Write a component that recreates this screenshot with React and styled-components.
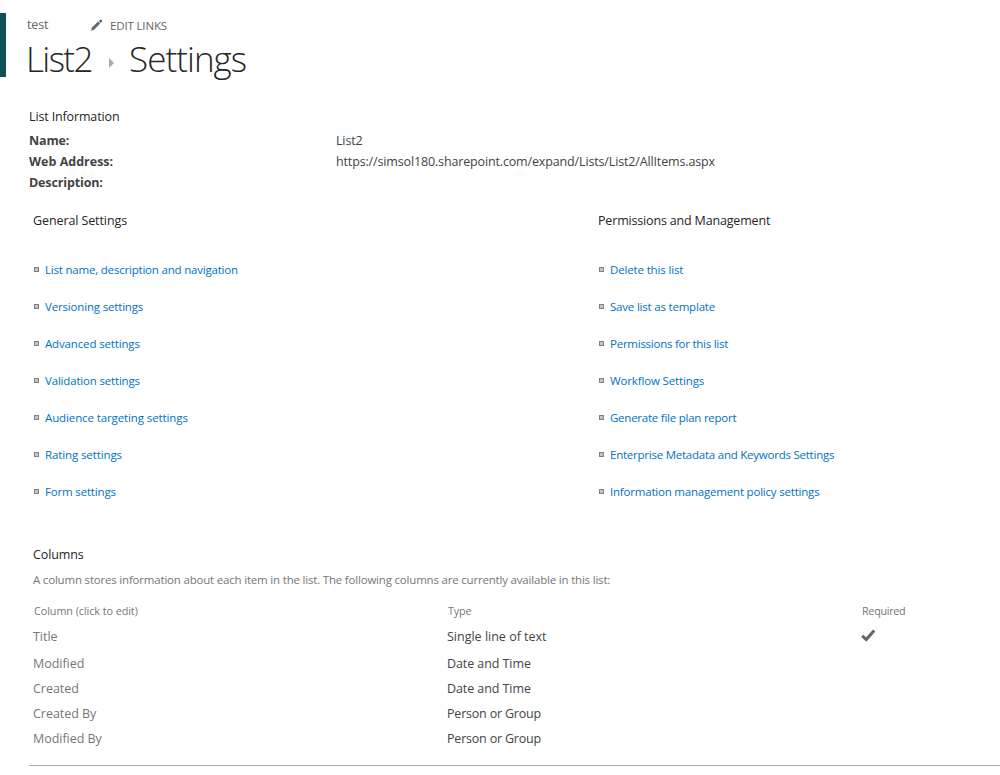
import React from 'react';
import styled, { createGlobalStyle } from 'styled-components';

const GlobalStyle = createGlobalStyle`
  *, *::before, *::after { box-sizing: border-box; }
  body {
    margin: 0;
    background: #fff;
    color: #444;
    font: 12.5px "Open Sans", "Noto Sans", sans-serif;
    overflow: hidden;
  }
`;

const Page = styled.main`
  height: 775px;
  padding-top: 13px;
  overflow: hidden;
  white-space: nowrap;
`;

const Header = styled.header`
  display: flex;
  height: 68px;
`;

const Accent = styled.div`
  width: 6px;
  height: 64px;
  margin-right: 21px;
  background: #0f5053;
`;

const TopLinks = styled.nav`
  display: flex;
  height: 23px;
  line-height: 23px;
  color: #666;
`;

const SiteLink = styled.a`
  width: 64px;
  letter-spacing: -0.15px;
`;

const EditLinks = styled.a`
  display: flex;
  gap: 7px;
  padding-top: 1px;
  font-size: 11.5px;
  letter-spacing: -0.15px;

  svg { margin-top: 5px; }
`;

const Title = styled.h1`
  display: flex;
  margin: 0;
  height: 45px;
  line-height: 45px;
  font-size: 35px;
  font-weight: 300;
  color: #262626;

  svg { margin: 22px 17px 0 16px; }
`;

const TitlePart = styled.span`
  width: ${(p) => p.$width}px;
  letter-spacing: ${(p) => p.$track}px;
  margin-left: ${(p) => p.$shift}px;
`;

const Info = styled.section`
  padding: 25px 0 0 29px;
`;

const Heading = styled.h2`
  margin: 0;
  height: 21px;
  line-height: 21px;
  font-size: 12.5px;
  font-weight: 400;
  color: #262626;
  letter-spacing: ${(p) => p.$track || 0}px;
`;

const Facts = styled.dl`
  display: grid;
  grid-template-columns: 307px auto;
  grid-auto-rows: 21px;
  margin: 3px 0 0;
  line-height: 21px;
`;

const Term = styled.dt`
  font-weight: 700;
  letter-spacing: ${(p) => p.$track || 0}px;
`;

const Value = styled.dd`
  margin: 0;
  letter-spacing: ${(p) => p.$track || 0}px;
`;

const Groups = styled.div`
  display: grid;
  grid-template-columns: 565px auto;
  padding: 17px 0 0 33px;
`;

const LinkList = styled.ul`
  margin: 20px 0 0;
  padding: 0;
  list-style: none;
`;

const LinkItem = styled.li`
  display: flex;
  align-items: center;
  gap: 5px;
  height: 37px;
  padding-left: 1px;

  &::before {
    content: '';
    width: 5px;
    height: 5px;
    margin-right: 1px;
    border: 1px solid #808080;
    background: #c4c4c4;
  }
`;

const SettingLink = styled.a`
  font-size: 11.5px;
  color: #0072c6;
  letter-spacing: ${(p) => p.$track}px;
`;

const Columns = styled.section`
  padding: 34px 0 0 33px;
`;

const Note = styled.p`
  margin: 5px 0 9px;
  height: 20px;
  line-height: 20px;
  font-size: 11.5px;
  letter-spacing: -0.193px;
  color: #777;
`;

const Row = styled.div`
  display: grid;
  grid-template-columns: 414px 414px auto;
  align-items: center;
  height: ${(p) => p.$height}px;
  margin-bottom: ${(p) => p.$gap || 0}px;

  svg { margin-bottom: 2px; }
`;

const HeadCell = styled.span`
  padding-left: 1px;
  font-size: 10.8px;
  color: #777;
  letter-spacing: ${(p) => p.$track || 0}px;
`;

const NameCell = styled.a`
  color: #777;
  letter-spacing: -0.03px;
`;

const TypeCell = styled.span`
  letter-spacing: ${(p) => p.$track || 0}px;
`;

const Divider = styled.hr`
  height: 1px;
  margin: 14px 0 0 29px;
  border: 0;
  background: #aaa;
`;

const general = [
  ['List name, description and navigation', -0.2],
  ['Versioning settings', -0.17],
  ['Advanced settings', -0.15],
  ['Validation settings', -0.18],
  ['Audience targeting settings', -0.11],
  ['Rating settings', -0.11],
  ['Form settings', -0.17],
];

const permissions = [
  ['Delete this list', -0.15],
  ['Save list as template', -0.2],
  ['Permissions for this list', -0.25],
  ['Workflow Settings', -0.14],
  ['Generate file plan report', -0.24],
  ['Enterprise Metadata and Keywords Settings', -0.235],
  ['Information management policy settings', -0.2],
];

const columns = [
  { name: 'Title', type: 'Single line of text', track: 0 },
  { name: 'Modified', type: 'Date and Time', track: -0.08 },
  { name: 'Created', type: 'Date and Time', track: -0.08 },
  { name: 'Created By', type: 'Person or Group', track: -0.2 },
  { name: 'Modified By', type: 'Person or Group', track: -0.2 },
];
columns[0].required = true;

const Pencil = () => (
  <svg width="12" height="12" viewBox="0 0 12 12" fill="#666">
    <path d="M0 11.7 1 8.6 7.2 2.6 9.1 4.6 3.1 10.7ZM7.9 1.9 9.2.7Q9.9.2 10.5.7L11 1.2Q11.6 1.9 11.1 2.6L9.8 3.9Z" />
  </svg>
);

const Arrow = () => (
  <svg width="5" height="10" viewBox="0 0 5 10" fill="#aaa">
    <path d="M0 0 5 5 0 10Z" />
  </svg>
);

const Check = () => (
  <svg width="15" height="13" viewBox="0 0 15 13" fill="none" stroke="#666" strokeWidth="3">
    <path d="M1.2 6.7 5.2 10.6 13.2 1.4" />
  </svg>
);

const Group = ({ title, track, links }) => (
  <section>
    <Heading $track={track}>{title}</Heading>
    <LinkList>
      {links.map(([label, spacing]) => (
        <LinkItem key={label}>
          <SettingLink $track={spacing}>{label}</SettingLink>
        </LinkItem>
      ))}
    </LinkList>
  </section>
);

export default function App() {
  return (
    <>
      <GlobalStyle />
      <Page>
        <Header>
          <Accent />
          <div>
            <TopLinks>
              <SiteLink>test</SiteLink>
              <EditLinks><Pencil />EDIT LINKS</EditLinks>
            </TopLinks>
            <Title>
              <TitlePart $width={67} $track={-1.6} $shift={-1}>List2</TitlePart>
              <Arrow />
              <TitlePart $width={120} $track={-0.95} $shift={-2}>Settings</TitlePart>
            </Title>
          </div>
        </Header>
        <Info>
          <Heading $track={-0.14}>List Information</Heading>
          <Facts>
            <Term $track={-0.15}>Name:</Term>
            <Value $track={-0.15}>List2</Value>
            <Term>Web Address:</Term>
            <Value $track={-0.145}>https://simsol180.sharepoint.com/expand/Lists/List2/AllItems.aspx</Value>
            <Term $track={-0.14}>Description:</Term>
            <Value />
          </Facts>
        </Info>
        <Groups>
          <Group title="General Settings" track={-0.1} links={general} />
          <Group title="Permissions and Management" track={-0.17} links={permissions} />
        </Groups>
        <Columns>
          <Heading $track={-0.12}>Columns</Heading>
          <Note>A column stores information about each item in the list. The following columns are currently available in this list:</Note>
          <Row $height={23} $gap={1}>
            <HeadCell $track={-0.06}>Column (click to edit)</HeadCell>
            <HeadCell $track={-0.15}>Type</HeadCell>
            <HeadCell $track={-0.3}>Required</HeadCell>
          </Row>
          {columns.map((c) => (
            <Row key={c.name} $height={c.required ? 27 : 25} $gap={c.required ? 1 : 0}>
              <NameCell>{c.name}</NameCell>
              <TypeCell $track={c.track}>{c.type}</TypeCell>
              {c.required && <Check />}
            </Row>
          ))}
        </Columns>
        <Divider />
      </Page>
    </>
  );
}
